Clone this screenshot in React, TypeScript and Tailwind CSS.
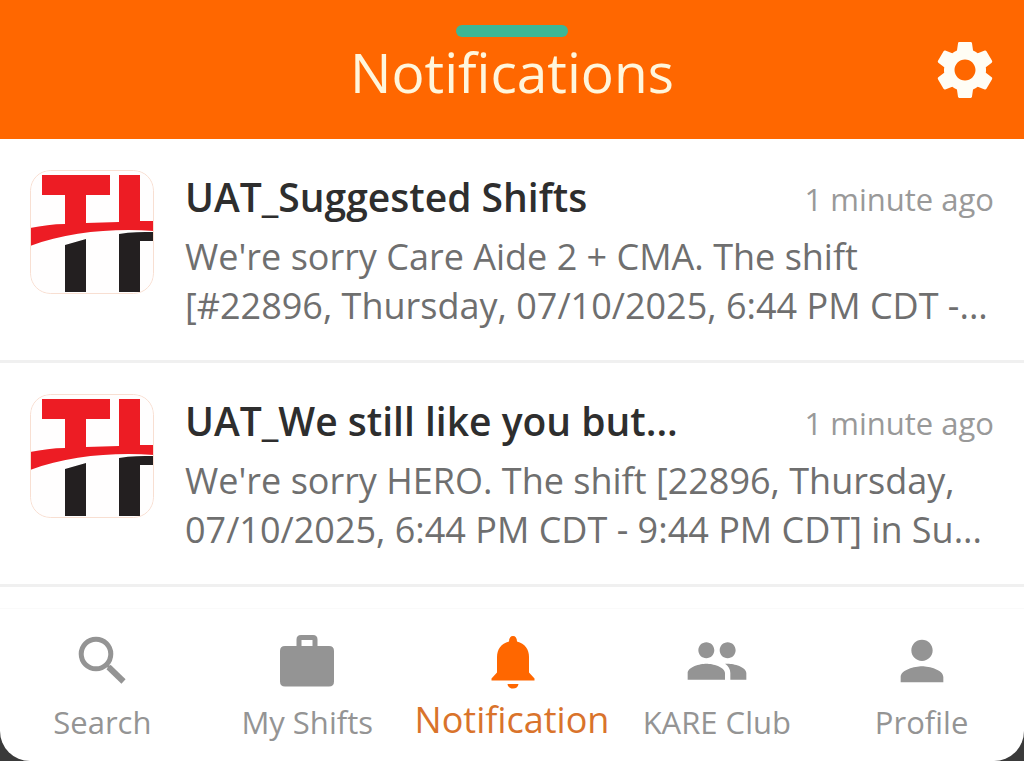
import React from 'react';
import { MdPeople, MdPerson, MdSettings } from 'react-icons/md';

const notifications = [
  {
    id: 1,
    title: 'UAT_Suggested Shifts',
    time: '1 minute ago',
    lines: ["We're sorry Care Aide 2 + CMA. The shift", '[#22896, Thursday, 07/10/2025, 6:44 PM CDT -...'],
  },
  {
    id: 2,
    title: 'UAT_We still like you but...',
    time: '1 minute ago',
    lines: ["We're sorry HERO. The shift [22896, Thursday,", '07/10/2025, 6:44 PM CDT - 9:44 PM CDT] in Su...'],
  },
];

function SearchIcon() {
  return (
    <svg viewBox="0 0 64 64" className="size-16" fill="none" stroke="currentColor" aria-hidden="true">
      <circle cx="26" cy="25" r="14.8" strokeWidth="5" />
      <path d="M36 35 40 39" strokeWidth="3" />
      <path d="M38.500 38 53.500 52.500" strokeWidth="6" />
    </svg>
  );
}

function BriefcaseIcon() {
  return (
    <svg viewBox="0 0 64 64" className="size-16" fill="currentColor" aria-hidden="true">
      <path d="M21.500 17V10.500Q21.500 6 26 6H38Q42.500 6 42.500 10.500V17H54Q59 17 59 22V52.500Q59 57.500 54 57.500H10Q5 57.500 5 52.500V22Q5 17 10 17ZM26.500 17H37.500V11H26.500Z" fillRule="evenodd" />
    </svg>
  );
}

function BellIcon() {
  return (
    <svg viewBox="0 0 64 64" className="size-16" fill="currentColor" aria-hidden="true">
      <path d="M33 7C30.500 7 29 9 29 12.500C21 14.500 17 20.500 17 28V43.500L11.500 49.500V51.500H54.500V49.500L49 43.500V28C49 20.500 45 14.500 37 12.500C37 9 35.500 7 33 7Z" />
      <path d="M27.500 55H38.500C38 58 36 59.500 33 59.500S28 58 27.500 55Z" />
    </svg>
  );
}

function Logo() {
  return (
    <svg viewBox="0 0 124 124" className="size-[124px] shrink-0 rounded-[20px]" role="img" aria-label="Logo">
      <rect width="124" height="124" fill="#fffefe" />
      <path d="M12 5H80V25H56V53C67 53 78 52 89 52V5H110V51H124V61C83 58 38 62 0 76V58C12 56 23 54 35 54V25H12Z" fill="#ed1c24" />
      <path d="M35 75 56 69V122H35ZM89 64C101 62 112 62 124 62V71H110V122H89Z" fill="#231f20" />
      <rect x="0.5" y="0.5" width="123" height="123" rx="20" fill="none" stroke="#f8dfd2" />
    </svg>
  );
}

const tabs = [
  { label: 'Search', icon: <SearchIcon /> },
  { label: 'My Shifts', icon: <BriefcaseIcon /> },
  { label: 'Notification', icon: <BellIcon />, active: true },
  { label: 'KARE Club', icon: <MdPeople className="size-16" /> },
  { label: 'Profile', icon: <MdPerson className="size-16" /> },
];

export default function App() {
  return (
    <div className="min-h-screen flex bg-[#3a3a3a] font-['Open_Sans',sans-serif]">
      <div className="flex-1 min-w-0 flex flex-col bg-white rounded-b-[30px] overflow-hidden">
        <header className="grid grid-cols-[1fr_auto_1fr] bg-[#ff6700] pt-[25px] pb-8 px-6">
          <div className="col-start-2 flex flex-col items-center">
            <div className="h-3 w-28 rounded-full bg-[#3cb795]" />
            <h1 className="text-[55px] leading-[70px] text-[#fff6dc]">Notifications</h1>
          </div>
          <button type="button" aria-label="Settings" className="self-start justify-self-end mt-[10px] text-[#fffdf5]">
            <MdSettings className="size-[70px]" />
          </button>
        </header>

        <main className="flex-1">
          {notifications.map((item) => (
            <article key={item.id} className="flex gap-[31px] h-56 border-b-[3px] border-[#f0f0f0] px-[30px] pt-[31px]">
              <Logo />
              <div className="flex-1 min-w-0">
                <div className="flex items-start justify-between">
                  <h2 className="text-[39px] leading-[54px] font-semibold text-[#2e2e2e] whitespace-nowrap">{item.title}</h2>
                  <time className="text-[31px] leading-[58px] text-[#999999] whitespace-nowrap">{item.time}</time>
                </div>
                <p className="mt-1 text-[36px] leading-[49px] text-[#6f6f6f]">
                  {item.lines.map((line) => (
                    <span key={line} className="block whitespace-nowrap">{line}</span>
                  ))}
                </p>
              </div>
            </article>
          ))}
        </main>

        <nav className="grid grid-cols-5 border-t border-[#fafafa] pt-5 pb-3">
          {tabs.map((tab) => (
            <button
              key={tab.label}
              type="button"
              aria-current={tab.active ? 'page' : undefined}
              className={`flex flex-col items-center ${tab.active ? 'text-[#ff6700]' : 'text-[#949494]'}`}
            >
              {tab.icon}
              <span className={tab.active ? 'mt-0.5 text-[36px] leading-[50px] text-[#d9732b] whitespace-nowrap' : 'mt-0.5 text-[31px] leading-[54px] whitespace-nowrap'}>
                {tab.label}
              </span>
            </button>
          ))}
        </nav>
      </div>
    </div>
  );
}
